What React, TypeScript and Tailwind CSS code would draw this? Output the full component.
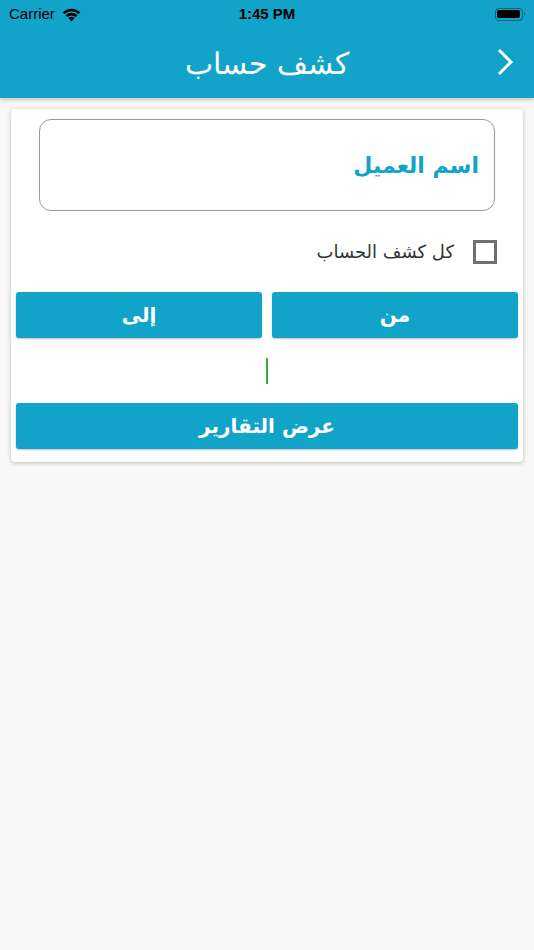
const arabic = { fontFamily: '"DejaVu Sans", sans-serif' };

function StatusBar() {
  return (
    <div className="relative flex h-7 items-center justify-between px-[9px] text-black" style={{ fontFamily: '"Liberation Sans", sans-serif' }}>
      <div className="flex items-center gap-[6px] text-[15px]">
        <span>Carrier</span>
        <svg width="21" height="15" viewBox="0 0 18 13">
          <path d="M9 12.5 L6.3 9.6 A4 4 0 0 1 11.7 9.6 Z" fill="#000" />
          <path d="M3.9 7.1 A7.4 7.4 0 0 1 14.1 7.1 L12.6 8.7 A5.3 5.3 0 0 0 5.4 8.7 Z" fill="#000" />
          <path d="M1.4 4.5 A11 11 0 0 1 16.6 4.5 L15.1 6.1 A8.9 8.9 0 0 0 2.9 6.1 Z" fill="#000" />
        </svg>
      </div>
      <span className="absolute left-1/2 -translate-x-1/2 text-[15px] font-bold">1:45 PM</span>
      <div className="flex items-center">
        <div className="flex h-[13px] w-[28px] items-center rounded-[4px] border border-black/40 p-[1.5px]">
          <div className="h-full w-full rounded-[2px] bg-black" />
        </div>
        <div className="ml-[1px] h-[4px] w-[1.5px] rounded-r bg-black/40" />
      </div>
    </div>
  );
}

export default function App() {
  return (
    <div className="min-h-[950px] bg-[#f8f8f8]">
      <header className="bg-[#12a3c8] shadow-[0_2px_4px_rgba(0,0,0,0.2)]">
        <StatusBar />
        <div className="relative flex h-[70px] items-center justify-center">
          <h1 className="text-[30px] font-light text-white" dir="rtl" style={arabic}>
            كشف حساب
          </h1>
          {/* back chevron */}
          <svg className="absolute right-[20px] top-[20px]" width="17" height="28" viewBox="0 0 17 28">
            <path d="M2 2 L14 14 L2 26" fill="none" stroke="#fff" strokeWidth="3" />
          </svg>
        </div>
      </header>

      <div className="px-[11px] pt-[11px]">
        <div className="rounded-[4px] bg-white px-[5px] pt-[10px] pb-[13px] shadow-[0_1px_4px_rgba(0,0,0,0.25)]" dir="rtl" style={arabic}>
          <div className="px-[23px]">
            <div className="flex h-[92px] items-center rounded-[12px] border border-[#9a9a9a] px-[15px]">
              <span className="text-[22px] font-bold text-[#12a3c8]">اسم العميل</span>
            </div>
          </div>

          <div className="mt-[27px] flex items-center gap-[19px] pr-[21px]">
            <div className="h-[24px] w-[24px] border-[3px] border-[#707070]" />
            <span className="text-[18px] text-[#333]">كل كشف الحساب</span>
          </div>

          <div className="mt-[27px] grid grid-cols-2 gap-[10px]">
            <button className="h-[46px] rounded-[3px] bg-[#12a3c8] text-[20px] font-bold text-white shadow-[0_1px_2px_rgba(0,0,0,0.25)]">
              من
            </button>
            <button className="h-[46px] rounded-[3px] bg-[#12a3c8] text-[20px] font-bold text-white shadow-[0_1px_2px_rgba(0,0,0,0.25)]">
              إلى
            </button>
          </div>

          <div className="flex h-[65px] items-center justify-center">
            <div className="h-[26px] w-[2px] bg-[#3aa83a]" />
          </div>

          <button className="h-[46px] w-full rounded-[3px] bg-[#12a3c8] text-[20px] font-bold text-white shadow-[0_1px_2px_rgba(0,0,0,0.25)]">
            عرض التقارير
          </button>
        </div>
      </div>
    </div>
  );
}
